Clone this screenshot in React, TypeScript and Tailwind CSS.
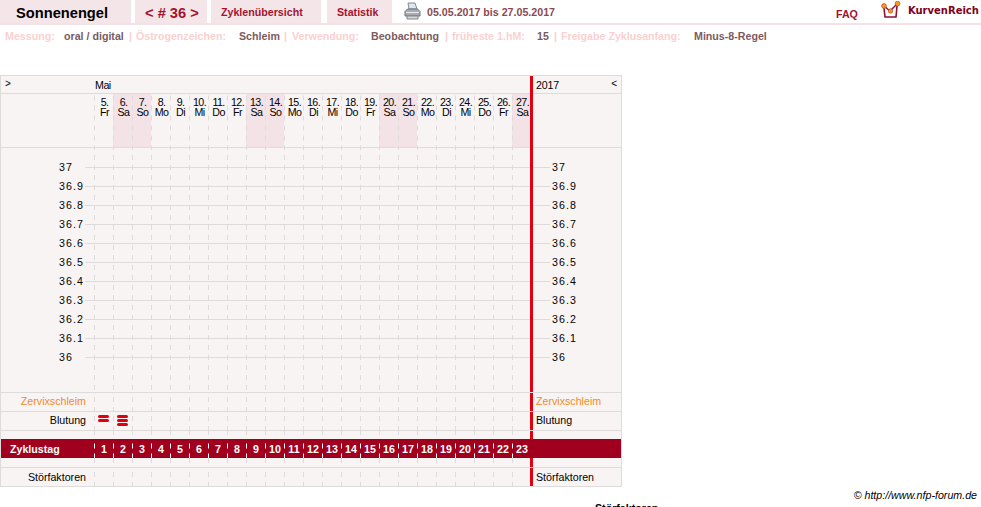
import React from "react";

const days = [
  ["5.", "Fr"], ["6.", "Sa"], ["7.", "So"], ["8.", "Mo"], ["9.", "Di"], ["10.", "Mi"], ["11.", "Do"], ["12.", "Fr"],
  ["13.", "Sa"], ["14.", "So"], ["15.", "Mo"], ["16.", "Di"], ["17.", "Mi"], ["18.", "Do"], ["19.", "Fr"], ["20.", "Sa"],
  ["21.", "So"], ["22.", "Mo"], ["23.", "Di"], ["24.", "Mi"], ["25.", "Do"], ["26.", "Fr"], ["27.", "Sa"],
];
const temps = ["37", "36.9", "36.8", "36.7", "36.6", "36.5", "36.4", "36.3", "36.2", "36.1", "36"];

const dash =
  "bg-[linear-gradient(to_bottom,#dedbdb_5px,transparent_5px)] bg-[length:1px_10px] bg-repeat-y bg-left";
const whiteDash =
  "bg-[linear-gradient(to_bottom,#ffffff_5px,transparent_5px)] bg-[length:1px_10px] bg-repeat-y bg-left";

const Cells = () => (
  <div className="flex h-full w-[436px] flex-none overflow-hidden">
    {days.map((d, i) => (
      <div key={i} className={`h-full w-[19px] flex-none ${dash}`} />
    ))}
  </div>
);

const Printer = () => (
  <svg width="17" height="18" viewBox="0 0 17 18">
    <path d="M4 1h7l2 6H5z" fill="#dfe6ee" stroke="#7f8b99" strokeWidth="1" />
    <path d="M1 9.5 3.5 7h10L16 9.5V14H1z" fill="#a9adb2" stroke="#6d7278" strokeWidth="1" />
    <path d="M3 14h11v3H3z" fill="#d8d9da" stroke="#80858a" strokeWidth="1" />
    <path d="M2 10.5h13" stroke="#e9ebed" strokeWidth="1" />
  </svg>
);

const Logo = () => (
  <svg width="20" height="18" viewBox="0 0 20 18">
    <path d="M3 7 4 16h11l1-11" fill="#fff" stroke="#8c1230" strokeWidth="1.6" />
    <path d="M3 5 9 10 16 3" fill="none" stroke="#a3122f" strokeWidth="1.5" />
    <circle cx="3" cy="5" r="2.4" fill="#f59a1e" stroke="#b8321e" strokeWidth="0.6" />
    <circle cx="9.5" cy="10" r="2.2" fill="#f59a1e" stroke="#b8321e" strokeWidth="0.6" />
    <circle cx="16.5" cy="2.6" r="2.4" fill="#f59a1e" stroke="#b8321e" strokeWidth="0.6" />
  </svg>
);

const Pills = ({ count }: { count: number }) => (
  <div className="flex w-[11px] flex-col gap-px">
    {Array.from({ length: count }).map((_, i) => (
      <div key={i} className="h-[3px] rounded-full bg-[#e00010]" />
    ))}
  </div>
);

const Row = ({ label, labelClass, children }: { label: string; labelClass: string; children?: React.ReactNode }) => (
  <div className="flex h-[19px] border-b border-[#dedbdb]">
    <div className={`w-[93px] flex-none pr-[8px] text-right ${labelClass}`}>{label}</div>
    <div className="relative flex w-[436px] flex-none">
      <Cells />
      {children}
    </div>
    <div className="w-[3px] flex-none bg-[#e00010]" />
    <div className={`w-[88px] flex-none pl-[3px] ${labelClass}`}>{label}</div>
  </div>
);

const Spacer = ({ height }: { height: string }) => (
  <div className={`flex ${height}`}>
    <div className="w-[93px] flex-none" />
    <Cells />
    <div className="w-[3px] flex-none bg-[#e00010]" />
  </div>
);

const Label = ({ children, className }: { children: React.ReactNode; className: string }) => (
  <span className={`text-[#fbd0d0] ${className}`}>{children}</span>
);
const Value = ({ children, className }: { children: React.ReactNode; className: string }) => (
  <span className={`text-[#7c5a60] ${className}`}>{children}</span>
);

export default function App() {
  return (
    <div className="relative h-[507px] w-[981px] overflow-hidden bg-white font-['Liberation_Sans',Arial,sans-serif] text-[10.67px] text-black antialiased">
      {/* top bar */}
      <div className="flex h-[25px] items-stretch border-b-2 border-[#f4e2e4] whitespace-nowrap">
        <div className="w-[131px] bg-[#f4e6e8] pl-[16px] text-[14.67px] leading-[26px] font-bold">Sonnenengel</div>
        <div className="ml-[4px] w-[72px] bg-[#f4e6e8] pl-[10px] text-[14.67px] leading-[26px] font-bold text-[#a3122f]">&lt; # 36 &gt;</div>
        <div className="ml-[4px] w-[110px] bg-[#f4e6e8] pl-[10px] leading-[24px] font-bold text-[#a3122f]">Zyklenübersicht</div>
        <div className="ml-[6px] w-[65px] bg-[#f4e6e8] pl-[10px] leading-[24px] font-bold text-[#a3122f]">Statistik</div>
        <div className="ml-[12px] flex items-center pb-[2px]"><Printer /></div>
        <div className="ml-[6px] w-[128px] leading-[24px] font-bold text-[#8a4a52]">05.05.2017 bis 27.05.2017</div>
        <div className="ml-[281px] pt-[8px] leading-[13px] font-bold text-[#a3122f]">FAQ</div>
        <div className="ml-[23px] pt-[1px]"><Logo /></div>
        <div className="ml-[7px] pt-[4px] font-['DejaVu_Sans',sans-serif] text-[10px] leading-[13px] font-bold text-[#7d0020]">KurvenReich</div>
      </div>

      {/* cycle info */}
      <div className="flex h-[22px] items-center font-bold whitespace-nowrap">
        <Label className="ml-[5px] w-[59px]">Messung:</Label>
        <Value className="w-[65px]">oral / digital</Value>
        <Label className="w-[7px]">|</Label>
        <Label className="w-[103px]">Östrogenzeichen:</Label>
        <Value className="w-[45px]">Schleim</Value>
        <Label className="w-[8px]">|</Label>
        <Label className="w-[79px]">Verwendung:</Label>
        <Value className="w-[74px]">Beobachtung</Value>
        <Label className="w-[7px]">|</Label>
        <Label className="w-[85px]">früheste 1.hM:</Label>
        <Value className="w-[17px]">15</Value>
        <Label className="w-[7px]">|</Label>
        <Label className="w-[133px]">Freigabe Zyklusanfang:</Label>
        <Value className="w-[90px]">Minus-8-Regel</Value>
      </div>

      {/* chart table */}
      <div className="mt-[28px] w-[622px] border-x border-t border-[#dedbdb] bg-[#f9f4f4]">
        <div className="flex h-[317px] border-b border-[#dedbdb]">
          <div className="flex w-[529px] flex-none flex-col">
            <div className="flex h-[18px] flex-none border-b border-[#dedbdb] leading-[19px] tracking-[-0.5px]">
              <div className="w-[93px] flex-none pl-[4px] text-[10px] leading-[16px]">&gt;</div>
              <div className="pl-[1px]">Mai</div>
            </div>
            <div className="flex h-[54px] flex-none border-b border-[#dedbdb]">
              <div className="w-[93px] flex-none" />
              <div className="flex w-[436px] flex-none overflow-hidden">
                {days.map(([d, w], i) => (
                  <div
                    key={i}
                    className={`h-full w-[19px] flex-none pt-[3px] pl-[2px] text-center leading-[10px] tracking-[-0.6px] ${dash} ${w === "Sa" || w === "So" ? "bg-[#f3e3e6]" : ""}`}
                  >
                    {d}
                    <br />
                    {w}
                  </div>
                ))}
              </div>
            </div>
            <div className="relative flex-1 pt-[10px]">
              <div className="absolute top-0 bottom-0 left-[93px]">
                <Cells />
              </div>
              {temps.map((t) => (
                <div key={t} className="relative flex h-[19px] items-center">
                  <div className="w-[84px] flex-none pb-[2px] pl-[58px] tracking-[1.1px]">{t}</div>
                  <div className="h-px flex-1 bg-[#dedbdb]" />
                </div>
              ))}
            </div>
          </div>
          <div className="w-[3px] flex-none bg-[#e00010]" />
          <div className="flex w-[88px] flex-none flex-col">
            <div className="flex h-[18px] flex-none justify-between border-b border-[#dedbdb] pr-[4px] pl-[3px] leading-[19px] tracking-[-0.2px]">
              <span>2017</span>
              <span className="text-[10px] leading-[16px]">&lt;</span>
            </div>
            <div className="h-[54px] flex-none border-b border-[#dedbdb]" />
            <div className="pt-[10px]">
              {temps.map((t) => (
                <div key={t} className="flex h-[19px] items-center">
                  <div className="h-px w-[17px] bg-[#dedbdb]" />
                  <div className="pb-[2px] pl-[2px] tracking-[1.1px]">{t}</div>
                </div>
              ))}
            </div>
          </div>
        </div>

        <Row label="Zervixschleim" labelClass="leading-[16px] text-[#f58a1f]" />
        <Row label="Blutung" labelClass="leading-[16px] text-black">
          <div className="absolute top-[3px] left-[4px]"><Pills count={2} /></div>
          <div className="absolute top-[3px] left-[23px]"><Pills count={3} /></div>
        </Row>
        <Spacer height="h-[8px]" />

        {/* cycle day band */}
        <div className="flex h-[19px] bg-[#a0001e] font-bold text-white">
          <div className="w-[93px] flex-none pl-[9px] leading-[20px]">Zyklustag</div>
          <div className="flex w-[436px] flex-none overflow-hidden">
            {days.map((_, i) => (
              <div key={i} className={`h-full w-[19px] flex-none pl-[1px] text-center leading-[20px] ${whiteDash}`}>
                {i + 1}
              </div>
            ))}
          </div>
        </div>

        <div className="border-b border-[#dedbdb]">
          <Spacer height="h-[9px]" />
        </div>
        <Row label="Störfaktoren" labelClass="leading-[18px] text-black" />
      </div>

      <div className="mt-[2px] w-[977px] text-right leading-[12px] italic">© http://www.nfp-forum.de</div>
      <div className="mt-[1px] pl-[595px] leading-[13px] font-bold">Störfaktoren</div>
    </div>
  );
}
